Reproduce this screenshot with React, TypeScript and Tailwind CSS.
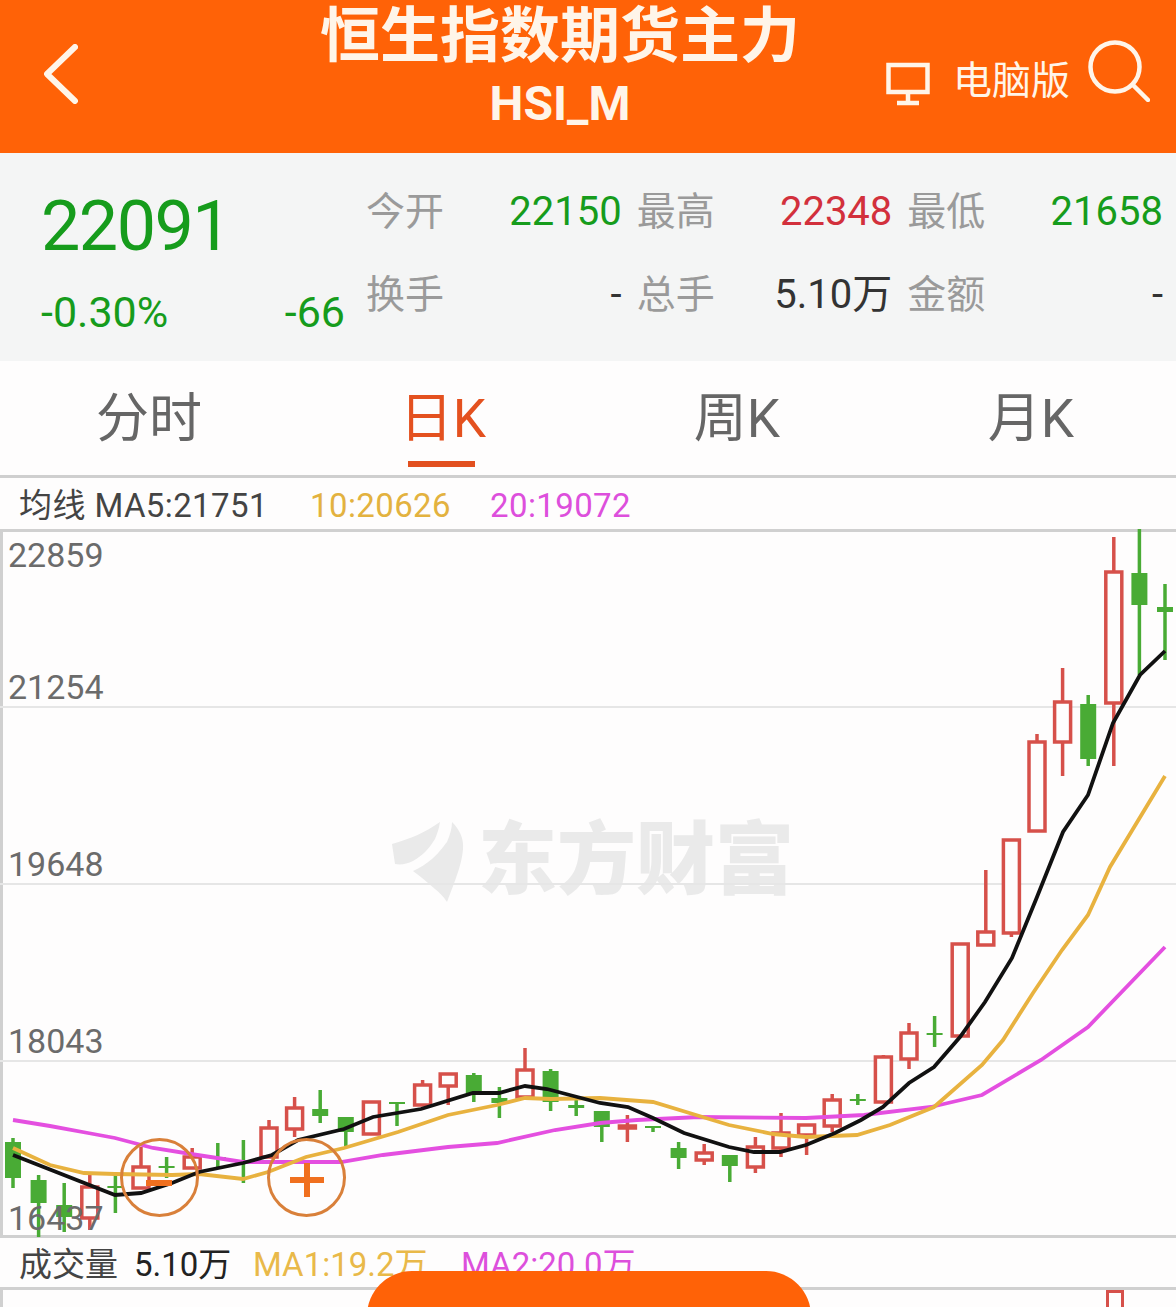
const CJK = "font-['Roboto','Noto_Sans_CJK_SC',sans-serif]";

// x is derived from the index, y values are page coordinates read off the picture
type Candle = { up: boolean; top: number; bottom: number; high: number; low: number };

const c = (up: boolean, top: number, bottom: number, high: number, low: number): Candle => ({ up, top, bottom, high, low });

const CANDLES: Candle[] = [
  c(false, 1142, 1178, 1138, 1188),
  c(false, 1180, 1203, 1175, 1237),
  c(false, 1205, 1217, 1183, 1232),
  c(true, 1187, 1218, 1175, 1230),
  c(false, 1186, 1188, 1173, 1213),
  c(true, 1167, 1188, 1147, 1188),
  c(false, 1166, 1168, 1157, 1178),
  c(true, 1157, 1168, 1148, 1168),
  c(false, 1157, 1159, 1143, 1167),
  c(false, 1161, 1163, 1140, 1183),
  c(true, 1128, 1157, 1120, 1157),
  c(true, 1108, 1129, 1097, 1137),
  c(false, 1109, 1116, 1090, 1123),
  c(false, 1117, 1132, 1117, 1148),
  c(true, 1102, 1134, 1102, 1134),
  c(false, 1102, 1104, 1103, 1126),
  c(true, 1085, 1105, 1080, 1105),
  c(true, 1074, 1086, 1074, 1105),
  c(false, 1075, 1093, 1073, 1102),
  c(false, 1098, 1103, 1087, 1118),
  c(true, 1070, 1097, 1048, 1097),
  c(false, 1071, 1102, 1069, 1111),
  c(false, 1105, 1108, 1100, 1116),
  c(false, 1111, 1127, 1111, 1142),
  c(true, 1126, 1128, 1115, 1142),
  c(false, 1126, 1128, 1127, 1132),
  c(false, 1148, 1158, 1142, 1169),
  c(true, 1153, 1160, 1144, 1165),
  c(false, 1155, 1166, 1155, 1182),
  c(true, 1147, 1167, 1137, 1173),
  c(true, 1133, 1148, 1113, 1157),
  c(true, 1125, 1135, 1125, 1155),
  c(true, 1100, 1126, 1094, 1132),
  c(false, 1099, 1101, 1094, 1105),
  c(true, 1057, 1102, 1055, 1102),
  c(true, 1033, 1059, 1023, 1069),
  c(false, 1033, 1035, 1016, 1047),
  c(true, 944, 1036, 944, 1036),
  c(true, 932, 945, 870, 946),
  c(true, 840, 933, 840, 937),
  c(true, 742, 831, 734, 831),
  c(true, 702, 742, 668, 776),
  c(false, 704, 759, 695, 766),
  c(true, 572, 703, 537, 766),
  c(false, 573, 605, 528, 675),
  c(false, 607, 612, 584, 660),
];

const MA5 =
  '13,1155 115,1195 141,1193 172,1183 199,1172 243,1163 272,1155 298,1140 344,1129 373,1117 421,1109 473,1093 499,1093 525,1086 547,1089 600,1103 628,1107 653,1118 684,1133 729,1147 754,1152 780,1152 806,1145 835,1133 861,1120 883,1107 909,1083 934,1067 960,1037 985,1002 1012,958 1037,897 1063,832 1088,795 1113,723 1140,675 1165,651';
const MA10 =
  '13,1148 50,1165 84,1173 115,1174 172,1175 199,1174 243,1179 268,1172 306,1157 344,1148 398,1132 448,1115 497,1105 525,1098 551,1099 600,1098 653,1102 696,1115 729,1125 773,1134 806,1137 857,1135 890,1125 934,1107 982,1065 1003,1040 1033,993 1062,950 1088,915 1110,867 1165,776';
const MA20 =
  '13,1120 50,1126 88,1133 115,1138 153,1148 191,1154 243,1162 268,1162 341,1162 383,1155 448,1147 497,1143 555,1130 600,1123 637,1120 699,1117 806,1118 864,1115 931,1107 982,1095 1041,1060 1088,1027 1165,947';

const AXIS = [
  { label: '22859', y: 6 },
  { label: '21254', y: 138 },
  { label: '19648', y: 315 },
  { label: '18043', y: 492 },
  { label: '16437', y: 669 },
];

const QUOTES = [
  { label: '今开', value: '22150', color: 'text-[#169c1c]' },
  { label: '最高', value: '22348', color: 'text-[#d2303c]' },
  { label: '最低', value: '21658', color: 'text-[#169c1c]' },
  { label: '换手', value: '-', color: 'text-[#333]' },
  { label: '总手', value: '5.10万', color: 'text-[#333]' },
  { label: '金额', value: '-', color: 'text-[#333]' },
];

function KChart() {
  return (
    <svg viewBox="0 529 1176 709" className="absolute inset-0 h-[709px] w-[1176px]">
      {[707, 884, 1061].map((y) => (
        <line key={y} x1="0" x2="1176" y1={y} y2={y} stroke="#e6e6e6" strokeWidth="2" />
      ))}
      {CANDLES.map((k, i) => {
        const x = 13 + i * 25.6;
        const color = k.up ? '#d6504a' : '#49ab35';
        return (
          <g key={i}>
            <line x1={x} x2={x} y1={k.high} y2={k.low} stroke={color} strokeWidth="3.5" />
            <rect
              x={x - 8}
              y={k.top}
              width="16"
              height={k.bottom - k.top}
              fill={k.up ? '#fefdfd' : color}
              stroke={color}
              strokeWidth={k.up ? 3.5 : 0}
            />
          </g>
        );
      })}
      <polyline points={MA20} fill="none" stroke="#e44fe0" strokeWidth="3.8" />
      <polyline points={MA10} fill="none" stroke="#e8b23f" strokeWidth="3.8" />
      <polyline points={MA5} fill="none" stroke="#111" strokeWidth="3.8" />
    </svg>
  );
}

function ZoomButton({ plus, left }: { plus?: boolean; left: string }) {
  return (
    <div className={`absolute top-[609px] flex h-[79px] w-[79px] items-center justify-center rounded-full border-[3px] border-[#d9803a] ${left}`}>
      <svg viewBox="0 0 36 36" className="mt-[5px] h-9 w-9" fill="none" stroke="#f0701f" strokeWidth="6">
        {plus ? <path d="M1 18H35M18 1V35" /> : <path d="M4 21H30" />}
      </svg>
    </div>
  );
}

export default function App() {
  return (
    <div className={`relative h-[1307px] w-[1176px] overflow-hidden bg-[#fefdfd] ${CJK}`}>
      {/* Header */}
      <div className="flex h-[153px] items-center bg-[#ff6207] pl-[44px] pr-[26px] text-[#fff5e9]">
        <svg viewBox="0 0 34 60" className="mb-[5px] h-[60px] w-[34px]" fill="none" stroke="currentColor" strokeWidth="6" strokeLinecap="round" strokeLinejoin="round">
          <path d="M31 3 3 30l28 27" />
        </svg>
        <div className="ml-[244px] flex w-[476px] flex-col items-center">
          <h1 className="-mt-[20px] text-[60px] leading-[72px] font-bold whitespace-nowrap">恒生指数期货主力</h1>
          <p className="mt-[3px] text-[48px] leading-[56px] font-bold">HSI_M</p>
        </div>
        <div className="ml-auto flex items-center">
          <svg viewBox="0 0 44 44" className="mt-[14px] -ml-[2px] h-[44px] w-[44px]" fill="none" stroke="currentColor" strokeWidth="4.5">
            <rect x="2.5" y="3" width="39" height="27" />
            <path d="M22 30v9M11 41h22" />
          </svg>
          <span className="ml-[23px] mt-[8px] text-[39px] leading-[48px]">电脑版</span>
          <svg viewBox="0 0 62 62" className="mb-[12px] ml-[18px] h-[62px] w-[62px]" fill="none" stroke="currentColor" strokeWidth="4.5" strokeLinecap="round">
            <circle cx="27" cy="27" r="24.5" />
            <path d="m45 45 15 15" />
          </svg>
        </div>
      </div>

      {/* Quote */}
      <div className="flex h-[208px] items-start bg-[#f4f5f5] pl-[41px] pr-[13px]">
        <div className="w-[304px]">
          <div className="mt-[29px] text-[70px] leading-[88px] tracking-[-1.5px] text-[#169c1c]">22091</div>
          <div className="mt-[19px] flex justify-between text-[43px] leading-[46px] text-[#169c1c]">
            <span>-0.30%</span>
            <span>-66</span>
          </div>
        </div>
        <div className="ml-[21px] mt-[35px] grid flex-1 grid-cols-3 gap-x-[15px] gap-y-[35px]">
          {QUOTES.map((q) => (
            <div key={q.label} className="flex items-center justify-between leading-[48px]">
              <span className="text-[39px] text-[#9a9a9a]">{q.label}</span>
              <span className={`text-[40px] ${q.color}`}>{q.value}</span>
            </div>
          ))}
        </div>
      </div>

      {/* Tabs */}
      <div className="flex h-[117px] border-b-[3px] border-[#cfcfcf] text-[53px] leading-[62px] text-[#666]">
        {['分时', '日K', '周K', '月K'].map((tab, i) => (
          <div key={tab} className="flex flex-1 flex-col items-center pl-[4px] pt-[27px]">
            <span className={i === 1 ? 'text-[#e4511f]' : ''}>{tab}</span>
            {i === 1 && <span className="mt-[11px] -ml-[4px] h-[6px] w-[67px] bg-[#e2501f]" />}
          </div>
        ))}
      </div>

      {/* MA legend */}
      <div className="flex h-[51px] items-center pl-[19px] pt-[4px] text-[33px] leading-[42px] tracking-[0.4px]">
        <span className="w-[291px] text-[#444]">均线 MA5:21751</span>
        <span className="w-[180px] text-[#e3b23f]">10:20626</span>
        <span className="text-[#dd4fdc]">20:19072</span>
      </div>

      {/* K line chart */}
      <div className="relative h-[709px] border-y-[3px] border-l-[3px] border-[#d0d0d0]">
        <div className="absolute -left-[3px] -top-[3px] h-[709px] w-[1176px]">
          <div className="absolute left-[390px] top-[288px] flex items-center text-[#eaeaea]">
            <svg viewBox="0 0 76 84" className="h-[84px] w-[76px]" fill="currentColor">
              <path d="M2 25C20 20 36 13 50 3 49 10 47 15 45 20 39 30 32 37 23 42 17 45 11 46 5 45Z" />
              <path d="M62 3C70 11 74 20 73 30 72 43 68 55 57 83 53 77 49 73 45 70 37 63 30 57 23 52 30 49 36 45 42 40 50 33 55 25 57 23 60 16 62 9 62 3Z" />
            </svg>
            <span className="ml-[12px] text-[79px] leading-[88px] font-black whitespace-nowrap">东方财富</span>
          </div>
          <KChart />
          {AXIS.map((a) => (
            <span key={a.label} className="absolute left-[8px] text-[34px] leading-[40px] text-[#6b6b6b]" style={{ top: a.y }}>
              {a.label}
            </span>
          ))}
          <ZoomButton left="left-[120px]" />
          <ZoomButton plus left="left-[267px]" />
        </div>
      </div>

      {/* Volume legend */}
      <div className="flex h-[49px] items-center pl-[19px] pt-[4px] text-[33px] leading-[42px]">
        <span className="w-[115px] text-[#444]">成交量</span>
        <span className="w-[119px] text-[#222]">5.10万</span>
        <span className="w-[208px] text-[#e9b949]">MA1:19.2万</span>
        <span className="text-[#dd4fdc]">MA2:20.0万</span>
      </div>

      {/* Volume chart, mostly cut off */}
      <div className="relative h-[30px] border-t-[3px] border-l-[3px] border-[#d0d0d0]">
        <div className="absolute left-[1103px] top-0 h-[40px] w-[18px] border-[3px] border-[#d6504a]" />
      </div>

      {/* Floating button */}
      <div className="absolute left-[367px] top-[1271px] h-[90px] w-[444px] rounded-[50px] bg-[#ff6207]" />
    </div>
  );
}
